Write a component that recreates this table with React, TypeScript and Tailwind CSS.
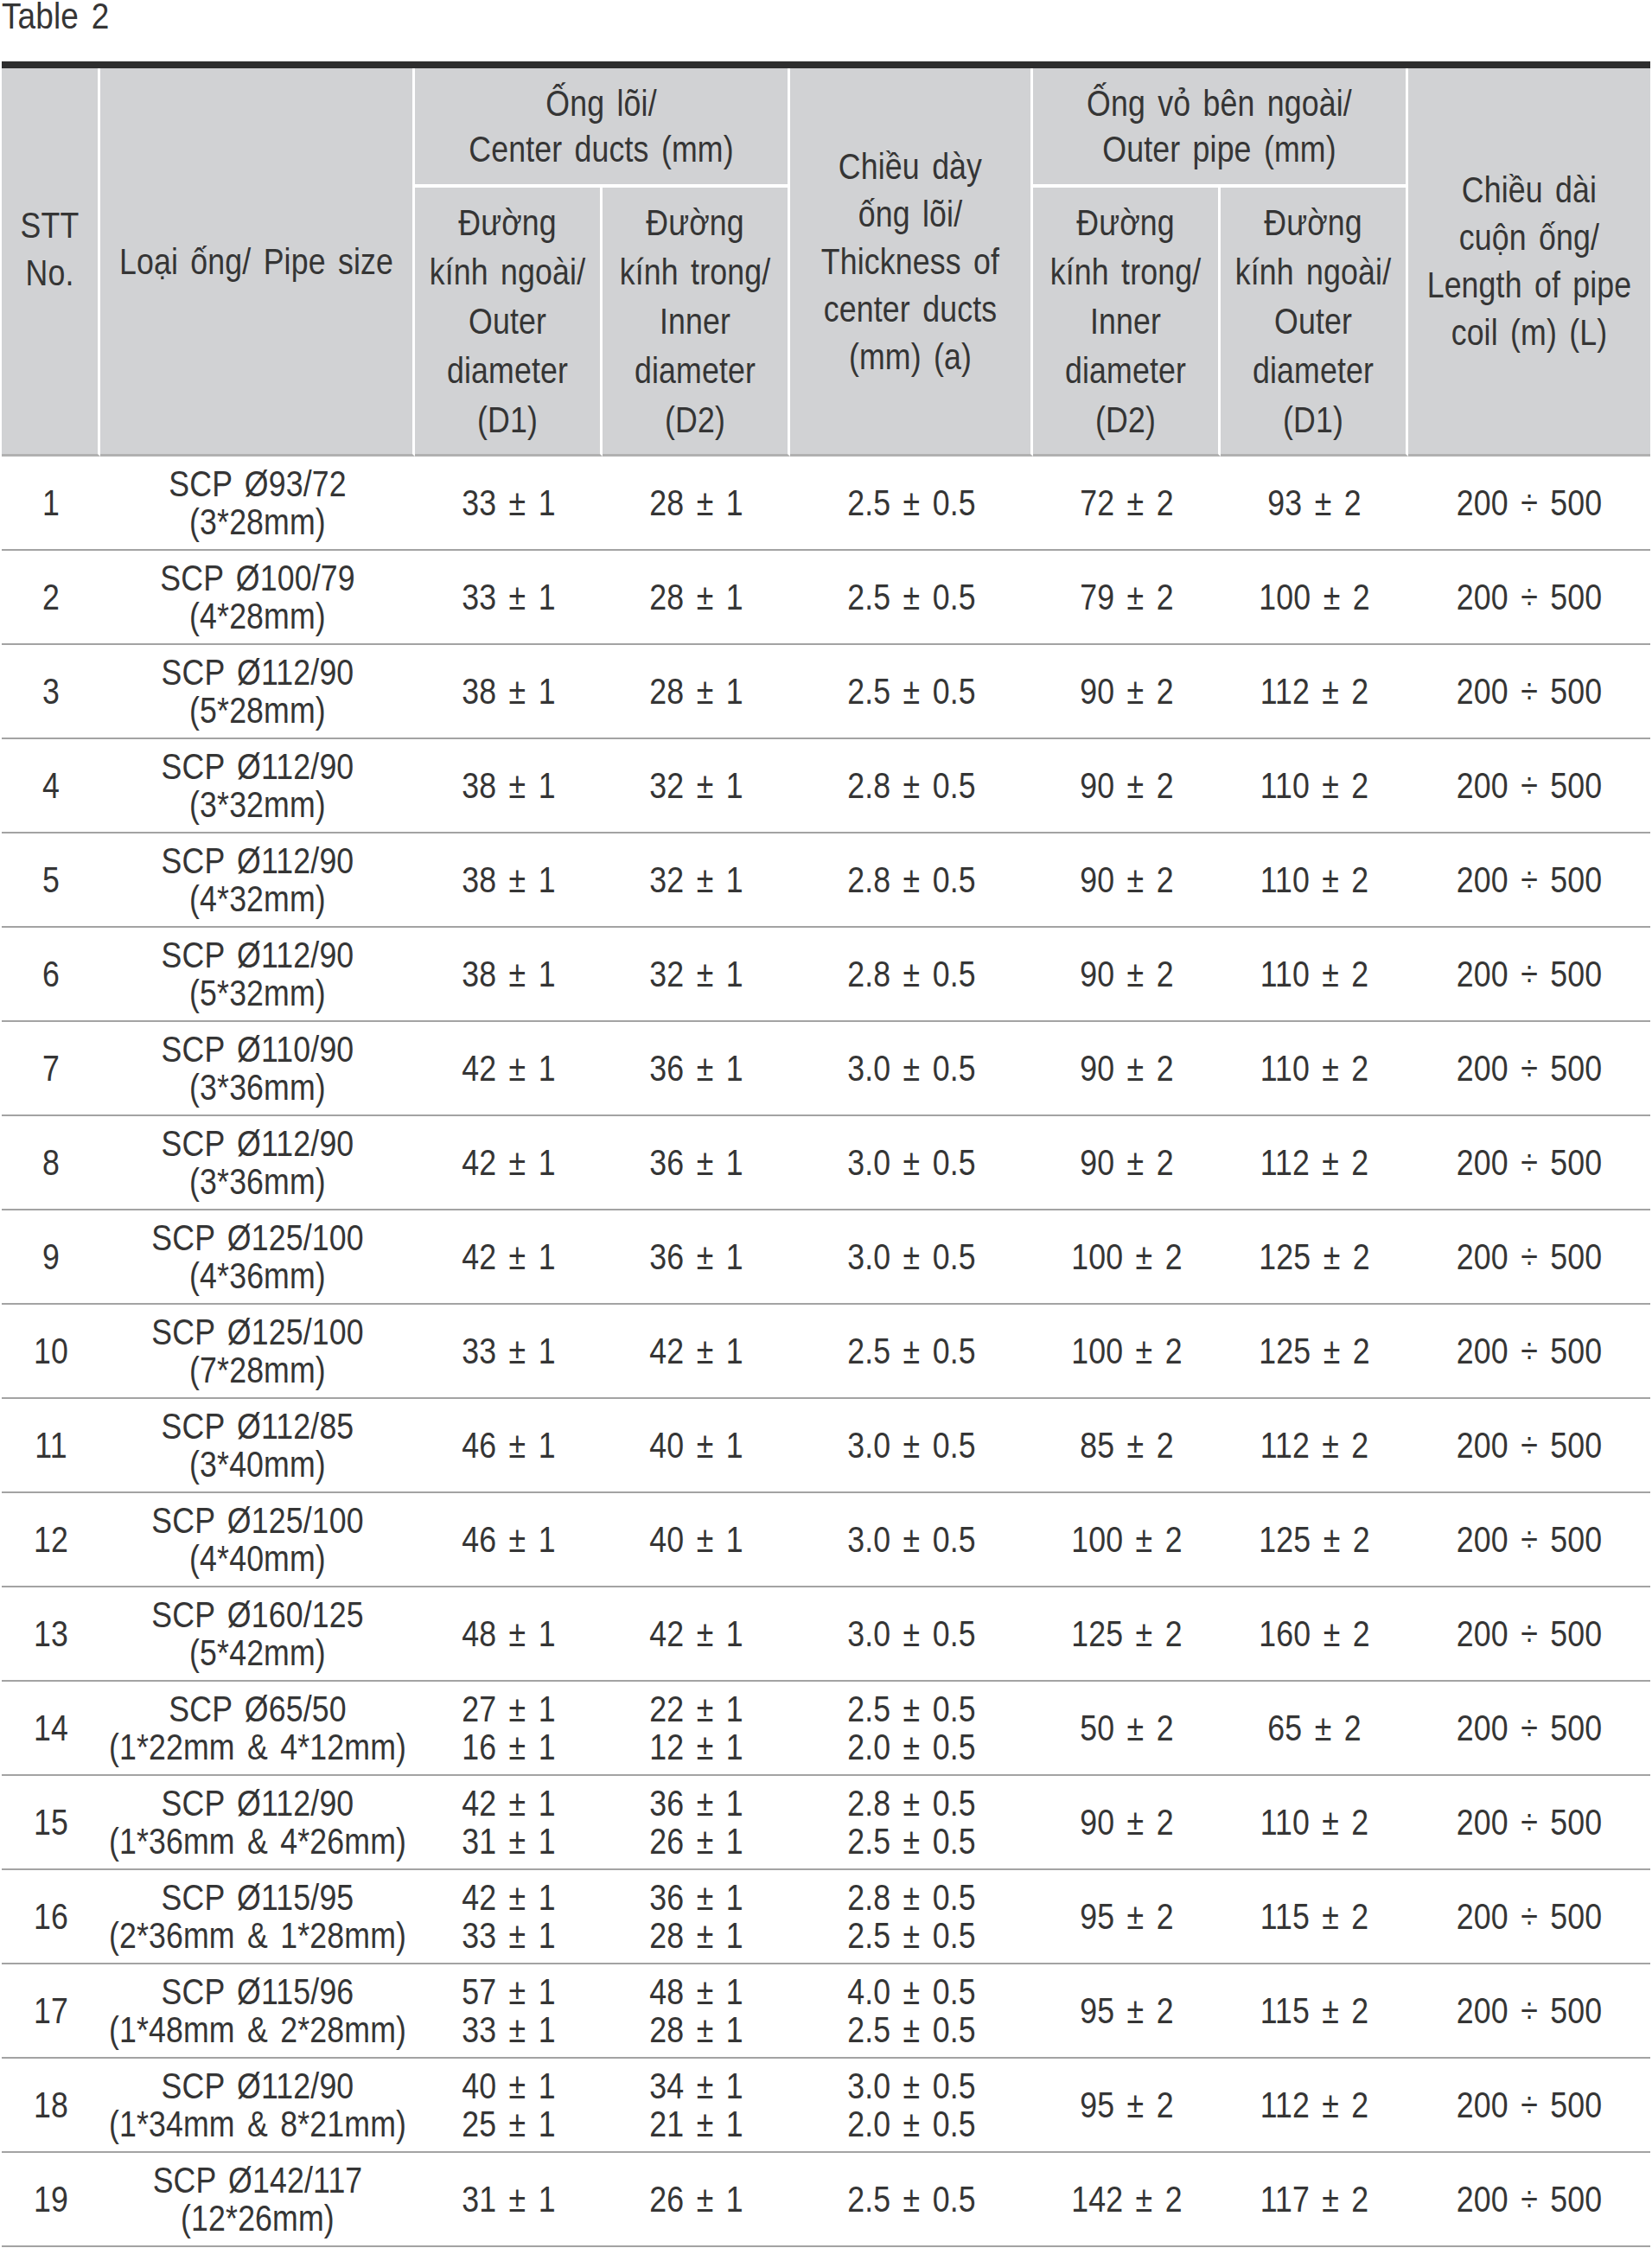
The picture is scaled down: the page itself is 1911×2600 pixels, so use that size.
import React from "react"

type Row = {
  no: number
  name: string
  spec: string
  d1: string[]
  d2: string[]
  thick: string[]
  outerIn: string
  outerOut: string
}

const rows: Row[] = [
  { no: 1, name: "SCP Ø93/72", spec: "(3*28mm)", d1: ["33 ± 1"], d2: ["28 ± 1"], thick: ["2.5 ± 0.5"], outerIn: "72 ± 2", outerOut: "93 ± 2" },
  { no: 2, name: "SCP Ø100/79", spec: "(4*28mm)", d1: ["33 ± 1"], d2: ["28 ± 1"], thick: ["2.5 ± 0.5"], outerIn: "79 ± 2", outerOut: "100 ± 2" },
  { no: 3, name: "SCP Ø112/90", spec: "(5*28mm)", d1: ["38 ± 1"], d2: ["28 ± 1"], thick: ["2.5 ± 0.5"], outerIn: "90 ± 2", outerOut: "112 ± 2" },
  { no: 4, name: "SCP Ø112/90", spec: "(3*32mm)", d1: ["38 ± 1"], d2: ["32 ± 1"], thick: ["2.8 ± 0.5"], outerIn: "90 ± 2", outerOut: "110 ± 2" },
  { no: 5, name: "SCP Ø112/90", spec: "(4*32mm)", d1: ["38 ± 1"], d2: ["32 ± 1"], thick: ["2.8 ± 0.5"], outerIn: "90 ± 2", outerOut: "110 ± 2" },
  { no: 6, name: "SCP Ø112/90", spec: "(5*32mm)", d1: ["38 ± 1"], d2: ["32 ± 1"], thick: ["2.8 ± 0.5"], outerIn: "90 ± 2", outerOut: "110 ± 2" },
  { no: 7, name: "SCP Ø110/90", spec: "(3*36mm)", d1: ["42 ± 1"], d2: ["36 ± 1"], thick: ["3.0 ± 0.5"], outerIn: "90 ± 2", outerOut: "110 ± 2" },
  { no: 8, name: "SCP Ø112/90", spec: "(3*36mm)", d1: ["42 ± 1"], d2: ["36 ± 1"], thick: ["3.0 ± 0.5"], outerIn: "90 ± 2", outerOut: "112 ± 2" },
  { no: 9, name: "SCP Ø125/100", spec: "(4*36mm)", d1: ["42 ± 1"], d2: ["36 ± 1"], thick: ["3.0 ± 0.5"], outerIn: "100 ± 2", outerOut: "125 ± 2" },
  { no: 10, name: "SCP Ø125/100", spec: "(7*28mm)", d1: ["33 ± 1"], d2: ["42 ± 1"], thick: ["2.5 ± 0.5"], outerIn: "100 ± 2", outerOut: "125 ± 2" },
  { no: 11, name: "SCP Ø112/85", spec: "(3*40mm)", d1: ["46 ± 1"], d2: ["40 ± 1"], thick: ["3.0 ± 0.5"], outerIn: "85 ± 2", outerOut: "112 ± 2" },
  { no: 12, name: "SCP Ø125/100", spec: "(4*40mm)", d1: ["46 ± 1"], d2: ["40 ± 1"], thick: ["3.0 ± 0.5"], outerIn: "100 ± 2", outerOut: "125 ± 2" },
  { no: 13, name: "SCP Ø160/125", spec: "(5*42mm)", d1: ["48 ± 1"], d2: ["42 ± 1"], thick: ["3.0 ± 0.5"], outerIn: "125 ± 2", outerOut: "160 ± 2" },
  { no: 14, name: "SCP Ø65/50", spec: "(1*22mm & 4*12mm)", d1: ["27 ± 1", "16 ± 1"], d2: ["22 ± 1", "12 ± 1"], thick: ["2.5 ± 0.5", "2.0 ± 0.5"], outerIn: "50 ± 2", outerOut: "65 ± 2" },
  { no: 15, name: "SCP Ø112/90", spec: "(1*36mm & 4*26mm)", d1: ["42 ± 1", "31 ± 1"], d2: ["36 ± 1", "26 ± 1"], thick: ["2.8 ± 0.5", "2.5 ± 0.5"], outerIn: "90 ± 2", outerOut: "110 ± 2" },
  { no: 16, name: "SCP Ø115/95", spec: "(2*36mm & 1*28mm)", d1: ["42 ± 1", "33 ± 1"], d2: ["36 ± 1", "28 ± 1"], thick: ["2.8 ± 0.5", "2.5 ± 0.5"], outerIn: "95 ± 2", outerOut: "115 ± 2" },
  { no: 17, name: "SCP Ø115/96", spec: "(1*48mm & 2*28mm)", d1: ["57 ± 1", "33 ± 1"], d2: ["48 ± 1", "28 ± 1"], thick: ["4.0 ± 0.5", "2.5 ± 0.5"], outerIn: "95 ± 2", outerOut: "115 ± 2" },
  { no: 18, name: "SCP Ø112/90", spec: "(1*34mm & 8*21mm)", d1: ["40 ± 1", "25 ± 1"], d2: ["34 ± 1", "21 ± 1"], thick: ["3.0 ± 0.5", "2.0 ± 0.5"], outerIn: "95 ± 2", outerOut: "112 ± 2" },
  { no: 19, name: "SCP Ø142/117", spec: "(12*26mm)", d1: ["31 ± 1"], d2: ["26 ± 1"], thick: ["2.5 ± 0.5"], outerIn: "142 ± 2", outerOut: "117 ± 2" },
]

const head = "bg-[#d1d2d4] p-0 text-center align-middle font-normal whitespace-nowrap border-white"
const cell = "p-0 text-center align-middle whitespace-nowrap border-b-2 border-[#a3a3a3]"

// the reference uses a condensed face; squeeze Liberation Sans to match
function Narrow({ children }: { children: React.ReactNode }) {
  return (
    <div className="flex justify-center scale-x-[0.85]">
      <span className="shrink-0 whitespace-nowrap text-center">{children}</span>
    </div>
  )
}

function Lines({ items }: { items: string[] }) {
  return (
    <Narrow>
      {items.map((t, i) => (
        <span key={i} className="block">{t}</span>
      ))}
    </Narrow>
  )
}

export default function App() {
  return (
    <div className="w-[1911px] bg-white pl-[2px] font-['Liberation_Sans','Arial',sans-serif] text-[#353535] tracking-[0.01em] [word-spacing:5px]">
      <p className="h-[38px] origin-left scale-x-[0.88] text-[42px] leading-[38px]">Table 2</p>
      <div className="mt-[33px] h-[8px] w-[1907px] bg-[#2e2e2e]" />

      <table className="w-[1907px] table-fixed border-separate border-spacing-0 text-[42px]">
        <colgroup>
          <col className="w-[114px]" />
          <col className="w-[364px]" />
          <col className="w-[217px]" />
          <col className="w-[217px]" />
          <col className="w-[281px]" />
          <col className="w-[217px]" />
          <col className="w-[217px]" />
          <col className="w-[280px]" />
        </colgroup>
        <thead>
          <tr className="h-[138px]">
            <th rowSpan={2} className={`${head} border-r-[3px] border-b-[3px] border-b-[#b1b1b1] pb-[29px] leading-[55px]`}>
              <Narrow>STT<br />No.</Narrow>
            </th>
            <th rowSpan={2} className={`${head} border-r-[3px] border-b-[3px] border-b-[#b1b1b1] leading-[55px]`}>
              <Narrow>Loại ống/ Pipe size</Narrow>
            </th>
            <th colSpan={2} className={`${head} border-r-[3px] border-b-[4px] leading-[53px]`}>
              <Narrow>Ống lõi/<br />Center ducts (mm)</Narrow>
            </th>
            <th rowSpan={2} className={`${head} border-r-[3px] border-b-[3px] border-b-[#b1b1b1] leading-[55px]`}>
              <Narrow>Chiều dày<br />ống lõi/<br />Thickness of<br />center ducts<br />(mm) (a)</Narrow>
            </th>
            <th colSpan={2} className={`${head} border-r-[3px] border-b-[4px] leading-[53px]`}>
              <Narrow>Ống vỏ bên ngoài/<br />Outer pipe (mm)</Narrow>
            </th>
            <th rowSpan={2} className={`${head} border-b-[3px] border-b-[#b1b1b1] leading-[55px]`}>
              <Narrow>Chiều dài<br />cuộn ống/<br />Length of pipe<br />coil (m) (L)</Narrow>
            </th>
          </tr>
          <tr className="h-[311px]">
            <th className={`${head} border-r-[3px] border-b-[3px] border-b-[#b1b1b1] leading-[57px]`}>
              <Narrow>Đường<br />kính ngoài/<br />Outer<br />diameter<br />(D1)</Narrow>
            </th>
            <th className={`${head} border-r-[3px] border-b-[3px] border-b-[#b1b1b1] leading-[57px]`}>
              <Narrow>Đường<br />kính trong/<br />Inner<br />diameter<br />(D2)</Narrow>
            </th>
            <th className={`${head} border-r-[3px] border-b-[3px] border-b-[#b1b1b1] leading-[57px]`}>
              <Narrow>Đường<br />kính trong/<br />Inner<br />diameter<br />(D2)</Narrow>
            </th>
            <th className={`${head} border-r-[3px] border-b-[3px] border-b-[#b1b1b1] leading-[57px]`}>
              <Narrow>Đường<br />kính ngoài/<br />Outer<br />diameter<br />(D1)</Narrow>
            </th>
          </tr>
        </thead>
        <tbody className="leading-[44px]">
          {rows.map((r) => (
            <tr key={r.no} className="h-[109px]">
              <td className={cell}><Narrow>{r.no}</Narrow></td>
              <td className={cell}><Lines items={[r.name, r.spec]} /></td>
              <td className={cell}><Lines items={r.d1} /></td>
              <td className={cell}><Lines items={r.d2} /></td>
              <td className={cell}><Lines items={r.thick} /></td>
              <td className={cell}><Narrow>{r.outerIn}</Narrow></td>
              <td className={cell}><Narrow>{r.outerOut}</Narrow></td>
              <td className={cell}><Narrow>200 ÷ 500</Narrow></td>
            </tr>
          ))}
        </tbody>
      </table>
    </div>
  )
}
